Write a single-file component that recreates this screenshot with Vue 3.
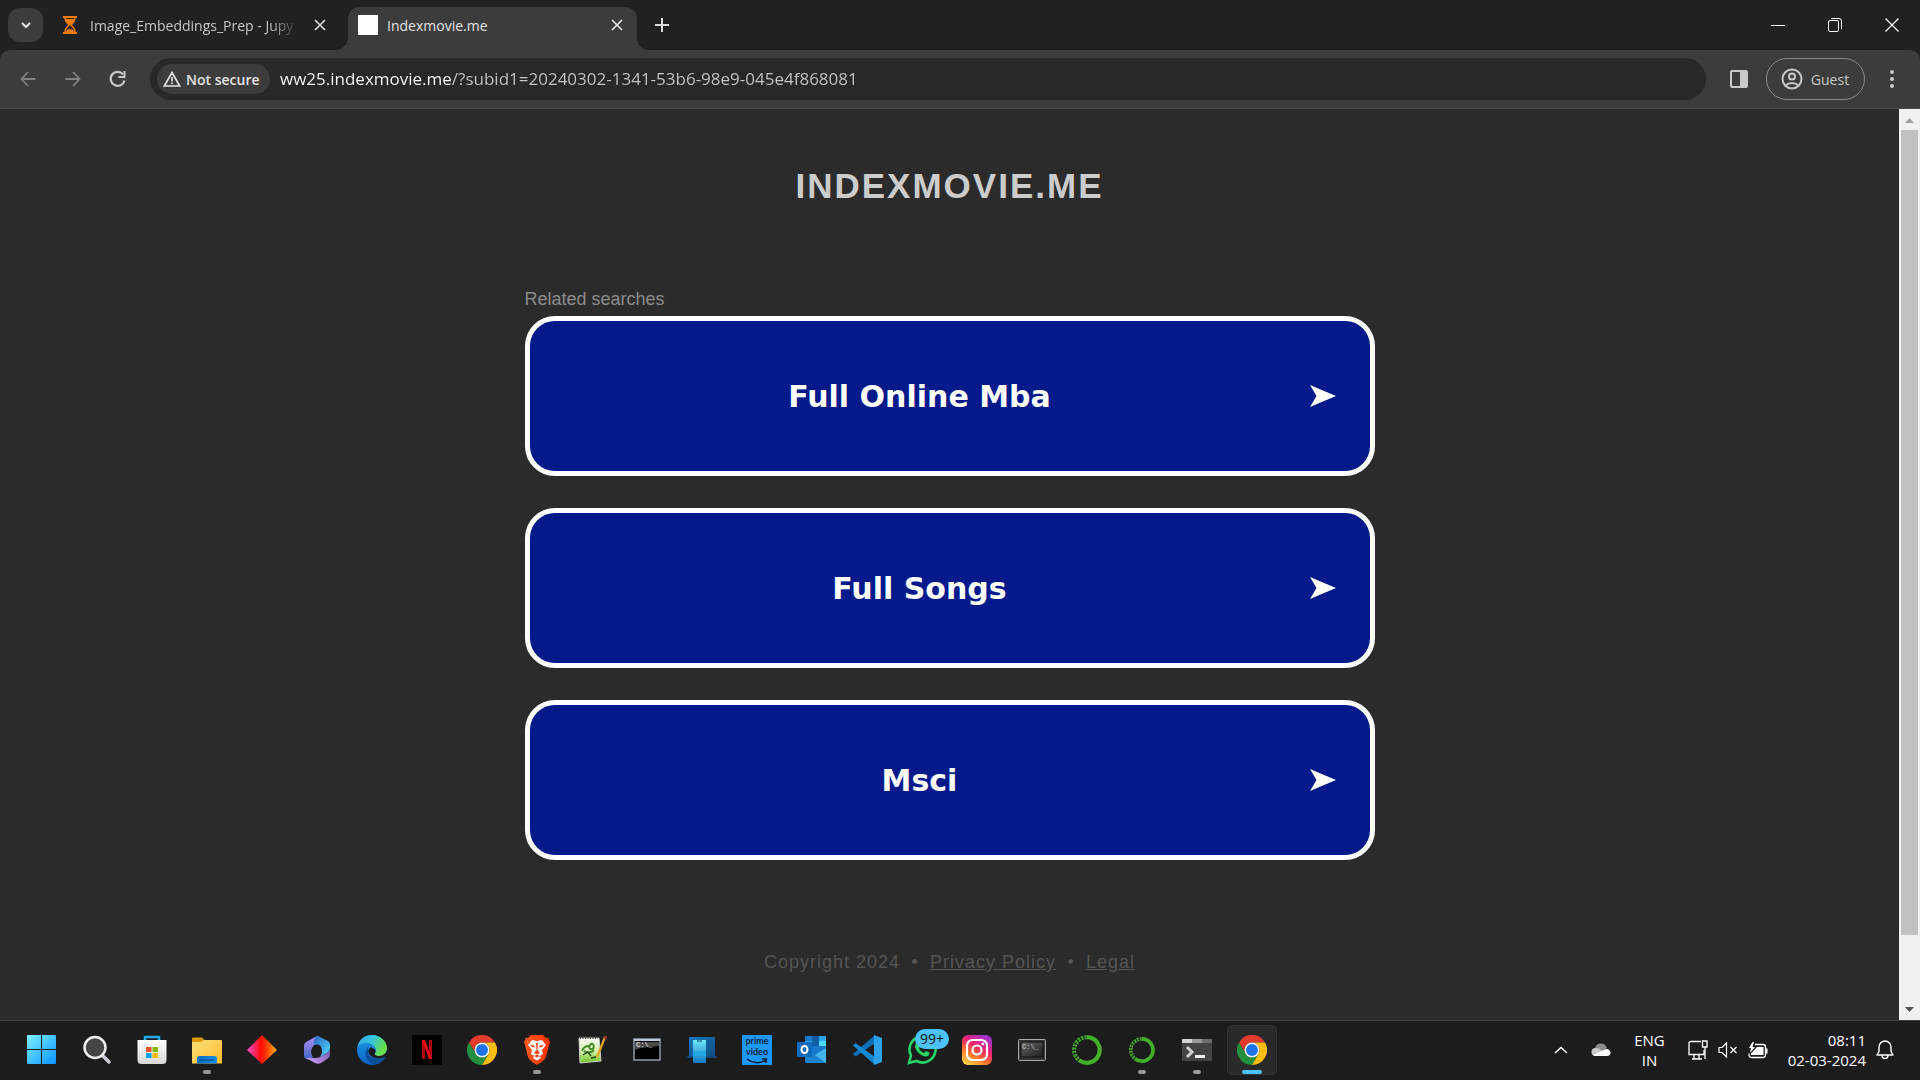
<script setup>
import { ref } from 'vue'

const address = ref('ww25.indexmovie.me/?subid1=20240302-1341-53b6-98e9-045e4f868081')
const searches = ['Full Online Mba', 'Full Songs', 'Msci']
</script>

<template>
  <div class="screen">
    <header class="browser">
      <div class="tabs">
        <button class="tab-search" aria-label="Search tabs">
          <svg width="12" height="12" viewBox="0 0 12 12"><path d="M2 4l4 4 4-4" fill="none" stroke="#e3e3e3" stroke-width="2" /></svg>
        </button>
        <div class="tab">
          <svg class="favicon" width="20" height="20" viewBox="0 0 20 20">
            <path d="M3 1h14v2H3zM3 17h14v2H3z" fill="#f57c00" />
            <path d="M5 3c0 4 2 5 4 7-2 2-4 3-4 7M15 3c0 4-2 5-4 7 2 2 4 3 4 7" fill="none" stroke="#f57c00" stroke-width="1.5" />
            <path d="M5 4h10c0 3-2 4-4 6H9C7 8 5 7 5 4zM6 17c0-2 2-3 4-3s4 1 4 3z" fill="#f57c00" />
          </svg>
          <span class="tab-title faded">Image_Embeddings_Prep - Jupy</span>
          <button class="icon-button" aria-label="Close tab">
            <svg width="12" height="12" viewBox="0 0 12 12"><path d="M1 1l10 10M11 1L1 11" stroke="#dcdcdc" stroke-width="1.6" /></svg>
          </button>
        </div>
        <div class="tab active">
          <span class="blank-icon"></span>
          <span class="tab-title">Indexmovie.me</span>
          <button class="icon-button" aria-label="Close tab">
            <svg width="12" height="12" viewBox="0 0 12 12"><path d="M1 1l10 10M11 1L1 11" stroke="#e8e8e8" stroke-width="1.6" /></svg>
          </button>
        </div>
        <button class="new-tab" aria-label="New tab">
          <svg width="14" height="14" viewBox="0 0 14 14"><path d="M7 0v14M0 7h14" stroke="#dcdcdc" stroke-width="2" /></svg>
        </button>
        <div class="window-controls">
          <button aria-label="Minimize"><svg width="14" height="14" viewBox="0 0 14 14"><path d="M0 7.5h14" stroke="#fff" /></svg></button>
          <button aria-label="Restore">
            <svg width="14" height="14" viewBox="0 0 14 14" fill="none" stroke="#fff"><rect x=".5" y="2.5" width="10" height="11" rx="1.5" /><path d="M3 .5h8a2.500 2.500 0 0 1 2.500 2.500v8" /></svg>
          </button>
          <button aria-label="Close"><svg width="14" height="14" viewBox="0 0 14 14"><path d="M.5.5l13 13M13.500.5l-13 13" stroke="#fff" stroke-width="1.2" /></svg></button>
        </div>
      </div>
      <div class="toolbar">
        <nav class="history">
          <button aria-label="Back"><svg width="16" height="16" viewBox="0 0 16 16"><path d="M15.500 8H2M8 1L1.500 8 8 15" fill="none" stroke="#808080" stroke-width="1.8" /></svg></button>
          <button aria-label="Forward"><svg width="16" height="16" viewBox="0 0 16 16"><path d="M.5 8H14M8 1l6.500 7L8 15" fill="none" stroke="#808080" stroke-width="1.800" /></svg></button>
          <button aria-label="Reload">
            <svg width="18" height="18" viewBox="0 0 18 18"><path d="M15.500 10.500A7 7 0 1 1 14 4.200" fill="none" stroke="#c9c9c9" stroke-width="2.2" /><path d="M16.500 1v7h-7V6h5V1z" fill="#c9c9c9" /></svg>
          </button>
        </nav>
        <div class="omnibox">
          <button class="security">
            <svg width="18" height="16" viewBox="0 0 18 16"><path d="M9 1.500L16.700 15H1.300z" fill="none" stroke="#e3e3e3" stroke-width="1.7" /><path d="M9 6v4.500M9 11.500v1.800" stroke="#e3e3e3" stroke-width="1.700" /></svg>
            Not secure
          </button>
          <input v-model="address" class="address" type="text" aria-label="Address" spellcheck="false" />
        </div>
        <button class="side-panel" aria-label="Side panel">
          <svg width="20" height="20" viewBox="0 0 20 20"><path fill-rule="evenodd" d="M3 1h14a2 2 0 0 1 2 2v14a2 2 0 0 1-2 2H3a2 2 0 0 1-2-2V3a2 2 0 0 1 2-2zm0 2v14h8V3z" fill="#c9c9c9" /></svg>
        </button>
        <button class="guest">
          <svg width="22" height="22" viewBox="0 0 22 22" fill="none" stroke="#c7c7c7" stroke-width="2"><circle cx="11" cy="11" r="9.500" /><circle cx="11" cy="8.500" r="3" /><path d="M4.500 17.500c3.500-3.500 9.500-3.500 13 0" /></svg>
          Guest
        </button>
        <button class="menu" aria-label="Menu">
          <svg width="4" height="20" viewBox="0 0 4 20" fill="#c9c9c9"><circle cx="2" cy="3" r="2" /><circle cx="2" cy="10" r="2" /><circle cx="2" cy="17" r="2" /></svg>
        </button>
      </div>
    </header>

    <div class="viewport">
      <main class="page">
        <h1>INDEXMOVIE.ME</h1>
        <section class="related">
          <h2>Related searches</h2>
          <a v-for="term in searches" :key="term" class="card" href="#">
            <span>{{ term }}</span>
            <svg width="26" height="24" viewBox="0 0 26 24"><path d="M0 1l26 11L0 23l6.500-11z" fill="#fff" /></svg>
          </a>
        </section>
        <footer>
          <span>Copyright 2024</span><span class="dot">•</span><a href="#">Privacy Policy</a><span class="dot">•</span><a href="#">Legal</a>
        </footer>
      </main>
      <div class="scrollbar">
        <svg width="21" height="21" viewBox="0 0 21 21"><path d="M6 14l4.500-5 4.500 5z" fill="#a0a0a0" /></svg>
        <div class="track"><div class="thumb"></div></div>
        <svg width="21" height="21" viewBox="0 0 21 21"><path d="M6 8l4.500 5L15 8z" fill="#505050" /></svg>
      </div>
    </div>

    <div class="taskbar">
      <svg class="defs" width="0" height="0">
        <defs>
          <linearGradient id="win" x1="0" y1="0" x2="1" y2="1"><stop offset="0" stop-color="#7df0ff" /><stop offset="1" stop-color="#0a94ff" /></linearGradient>
          <linearGradient id="bag" x1="0" y1="0" x2="0" y2="1"><stop offset="0" stop-color="#fff" /><stop offset="1" stop-color="#d9d9d9" /></linearGradient>
          <linearGradient id="folder" x1="0" y1="0" x2="1" y2="1"><stop offset="0" stop-color="#ffe07a" /><stop offset="1" stop-color="#fcbc2b" /></linearGradient>
          <linearGradient id="folderblue" x1="0" y1="0" x2="1" y2="0"><stop offset="0" stop-color="#0a6fc4" /><stop offset="1" stop-color="#1a8be0" /></linearGradient>
          <linearGradient id="gem" x1="0" y1="0" x2="1" y2="0"><stop offset="0" stop-color="#ff4fd8" /><stop offset=".45" stop-color="#ff0a0a" /><stop offset=".6" stop-color="#ff2a00" /><stop offset="1" stop-color="#ffb400" /></linearGradient>
          <linearGradient id="m1" x1="0" y1="0" x2="0" y2="1"><stop offset="0" stop-color="#b78cf0" /><stop offset="1" stop-color="#3f68c8" /></linearGradient>
          <linearGradient id="m2" x1="0" y1="0" x2="1" y2="1"><stop offset="0" stop-color="#2a64c8" /><stop offset="1" stop-color="#55dcf8" /></linearGradient>
          <linearGradient id="m3" x1="0" y1="1" x2="1" y2="0"><stop offset="0" stop-color="#d3a3f8" /><stop offset="1" stop-color="#6a52a8" /></linearGradient>
          <linearGradient id="edge1" x1="0" y1="0" x2="1" y2=".4"><stop offset="0" stop-color="#2aa4e8" /><stop offset=".5" stop-color="#35c4dc" /><stop offset="1" stop-color="#6be04a" /></linearGradient>
          <linearGradient id="edge2" x1="0" y1="0" x2="0" y2="1"><stop offset="0" stop-color="#1b9de2" /><stop offset="1" stop-color="#0b63c4" /></linearGradient>
          <linearGradient id="brave" x1="0" y1="0" x2="1" y2="0"><stop offset="0" stop-color="#ff5a1f" /><stop offset="1" stop-color="#ff2d00" /></linearGradient>
          <linearGradient id="npp" x1="0" y1="0" x2="0" y2="1"><stop offset="0" stop-color="#fafcf8" /><stop offset=".5" stop-color="#d9f0b0" /><stop offset="1" stop-color="#68c41c" /></linearGradient>
          <linearGradient id="laptop" x1="0" y1="0" x2="1" y2="1"><stop offset="0" stop-color="#1578bc" /><stop offset="1" stop-color="#0d4c82" /></linearGradient>
          <linearGradient id="phone" x1="0" y1="0" x2="0" y2="1"><stop offset="0" stop-color="#6fe8fa" /><stop offset="1" stop-color="#1277c4" /></linearGradient>
          <linearGradient id="insta" x1=".2" y1="1" x2=".8" y2="0"><stop offset="0" stop-color="#ffd24a" /><stop offset=".3" stop-color="#ff7a2a" /><stop offset=".6" stop-color="#f0246c" /><stop offset="1" stop-color="#9a35d8" /></linearGradient>
          <linearGradient id="dark" x1="0" y1="0" x2="1" y2="1"><stop offset="0" stop-color="#6a6a6a" /><stop offset="1" stop-color="#1c1c1c" /></linearGradient>
          <symbol id="chrome" viewBox="0 0 30 30">
            <path d="M2 7.500A15 15 0 0 1 28 7.500H15A7.500 7.500 0 0 0 8.500 18.750z" fill="#e23b2e" />
            <path d="M2 7.500l6.500 11.250A7.500 7.500 0 0 0 21.500 18.750L15 30A15 15 0 0 1 2 7.500z" fill="#22913f" />
            <path d="M28 7.500A15 15 0 0 1 15 30l6.500-11.250A7.500 7.500 0 0 0 15 7.500z" fill="#fbbc0c" />
            <circle cx="15" cy="15" r="7.500" fill="#fff" /><circle cx="15" cy="15" r="6" fill="#1f73e8" />
          </symbol>
          <symbol id="anaconda" viewBox="0 0 30 30">
            <path d="M15 2.200A12.800 12.800 0 1 1 7 25.100" fill="none" stroke="#43b02a" stroke-width="4.200" />
            <path d="M15 2.200A12.800 12.800 0 0 0 7 25.100" fill="none" stroke="#43b02a" stroke-width="4" stroke-dasharray="2.500 1" />
            <path d="M15 2.200A12.800 12.800 0 0 0 7 25.100" fill="none" stroke="#1c1c1c" stroke-width="1" stroke-dasharray="1.500 1.300" />
          </symbol>
        </defs>
      </svg>
      <div class="apps">
        <button aria-label="Start"><svg width="30" height="30" viewBox="0 0 30 30"><path d="M1 0h13v14H0V1a1 1 0 0 1 1-1zM15 0h13a1 1 0 0 1 1 1v13H15zM0 15h14v14H1a1 1 0 0 1-1-1zM15 15h14v13a1 1 0 0 1-1 1H15z" fill="url(#win)" /></svg></button>
        <button aria-label="Search"><svg width="30" height="30" viewBox="0 0 30 30"><path d="M20.500 20.500l6.500 6.500" stroke="#c9cfd6" stroke-width="3.500" stroke-linecap="round" /><circle cx="13" cy="12.500" r="10.500" fill="#454545" stroke="#eceef0" stroke-width="2.500" /></svg></button>
        <button aria-label="Store"><svg width="30" height="30" viewBox="0 0 30 30"><path d="M8 7V2h14v5" fill="none" stroke="#28a8ec" stroke-width="2.500" /><path d="M.5 5h29v20a4 4 0 0 1-4 4h-21a4 4 0 0 1-4-4z" fill="url(#bag)" /><path d="M9 12h5.500v5H9z" fill="#f25022" /><path d="M15.500 12H21v5h-5.500z" fill="#7fba00" /><path d="M9 18h5.500v5H9z" fill="#00a4ef" /><path d="M15.500 18H21v5h-5.500z" fill="#ffb900" /></svg></button>
        <button class="running" aria-label="File Explorer"><svg width="30" height="30" viewBox="0 0 30 30"><path d="M0 3.500a1 1 0 0 1 1-1h9l3 3-4 4H0z" fill="#dd9a07" /><path d="M0 7h9l3-2h17a1 1 0 0 1 1 1v22.500H0z" fill="url(#folder)" /><path d="M5 28.500v-5A2.500 2.500 0 0 1 7.500 21h15a2.500 2.500 0 0 1 2.500 2.500v5z" fill="url(#folderblue)" /><path d="M8 25h14" stroke="#084e91" stroke-width="1.200" /></svg></button>
        <button aria-label="Diamond"><svg width="30" height="30" viewBox="0 0 30 30"><path d="M15 0l15 15-15 14L0 15z" fill="url(#gem)" /></svg></button>
        <button aria-label="Microsoft 365"><svg width="30" height="30" viewBox="0 0 30 30"><path d="M15 1L4 7a4 4 0 0 0-2 4v10c0 3 4 4 6 3l3-2c-4-5-1-12 4-13z" fill="url(#m1)" /><path d="M15 1c-3 2-4 6-3 9l7 3c2 3 1 6-1 9l7-4c2-1 3-3 3-5v-3c0-2-1-3-2-4l-8-4c-1-1-2-1-3-1z" fill="url(#m2)" /><path d="M28 13c0 4-5 6-10 9-5 2-9 0-14 1l9 5c2 1 4 1 6 0l6-4c2-1 3-3 3-5z" fill="url(#m3)" /><circle cx="15" cy="14" r="4.500" fill="#1c1c1c" /></svg></button>
        <button aria-label="Edge"><svg width="30" height="30" viewBox="0 0 30 30"><circle cx="15" cy="15" r="15" fill="url(#edge2)" /><path d="M.5 12C2 4 8 0 15 0c9 0 15 7 15 13 0 5-4 8-8 8-3 0-5-1-4-3 2-2 1-5-1-7C12 6 4 7 .5 12z" fill="url(#edge1)" /><path d="M11 12c-6 8 0 17 8 17.500 4-1 7-4 8.500-7.500-6 3-15 2-16.500-4z" fill="#0d4f9c" /><path d="M15 12c-4 1-5 6-1 9 4 3 10 3 14 1l2 1v-8c-1 4-5 6-8 6-3 0-5-1-4-3 1-1 1-4-3-5z" fill="#1c1c1c" /></svg></button>
        <button aria-label="Netflix"><svg width="30" height="30" viewBox="0 0 30 30"><rect width="30" height="30" fill="#000" /><rect x="10" y="5" width="3" height="19" fill="#b1060f" /><rect x="17" y="5" width="3" height="19" fill="#b1060f" /><path d="M10 5h3l7 19h-3z" fill="#f00a15" /></svg></button>
        <button aria-label="Chrome"><svg width="30" height="30"><use href="#chrome" /></svg></button>
        <button class="running" aria-label="Brave"><svg width="30" height="30" viewBox="0 0 30 30"><path d="M9 0h12l3 3 2-.5 2 4.500-1 3-3 12c-1 3-6 6-9 8-3-2-8-5-9-8L3 10 2 7l2-4.500L6 3z" fill="url(#brave)" /><path d="M10 5l5 1 5-1 4 5-4 5 1 4-3 2 1 2-4 2.500-4-2.500 1-2-3-2 1-4-4-5z" fill="#fff" /><path d="M8 9.500l4 1 1 2-3-.5zM22 9.500l-4 1-1 2 3-.5zM14 8h2l-.5 7 2.500 3-3 1.500-3-1.500 2.500-3zM12 21l3-1.500 3 1.500-3 1.500z" fill="#fa4a18" /></svg></button>
        <button aria-label="Notepad++"><svg width="30" height="30" viewBox="0 0 30 30"><path d="M2 3h20l2 23-21 2z" fill="url(#npp)" stroke="#d0d0d0" /><path d="M3 2.500h18" stroke="#444" stroke-width="3" stroke-dasharray="1 1.500" /><path d="M5 16c1-3 4-5 7-5M13 9c4-2 5 4 2 5s-4-4 0-5M7 16c4 3 8 1 10-1" fill="none" stroke="#3f8a22" stroke-width="1.800" /><path d="M6 20l5-3 3 4M14 23l5-1" stroke="#263a14" stroke-width="1.300" fill="none" /><path d="M28 2l-7 18-1 2" stroke="#e7a125" stroke-width="2.200" fill="none" /><path d="M29 1l-1 3" stroke="#a03020" stroke-width="2.500" /></svg></button>
        <button aria-label="Command Prompt"><svg width="28" height="24" viewBox="0 0 28 24"><path d="M1 1h26v21H1z" fill="#000" stroke="#8e98a5" stroke-width="1.500" /><path d="M1 1h26v2H1z" fill="#c3ccd6" /><path d="M2 12C8 9 18 9 26 8V4H2z" fill="#4a4a4a" /><text x="3" y="9" class="prompt">C:\_</text></svg></button>
        <button aria-label="Phone Link"><svg width="30" height="30" viewBox="0 0 30 30"><path d="M3 2h24a1 1 0 0 1 1 1v18H2V3a1 1 0 0 1 1-1z" fill="url(#laptop)" /><path d="M0 21h30l-1 2H1z" fill="#0a4a80" /><path d="M6 5h13v23H7a1 1 0 0 1-1-1z" fill="url(#phone)" /><path d="M6 16h13v5H6z" fill="#28a8e0" /><path d="M10 6h5" stroke="#0a3c6a" /></svg></button>
        <button aria-label="Prime Video"><span class="prime">prime<br />video<svg width="22" height="6" viewBox="0 0 22 6"><path d="M1 1c6 4.500 13 4.500 19 1M16 1h4.500L20 5" fill="none" stroke="#0b1f33" stroke-width="1.500" /></svg></span></button>
        <button aria-label="Outlook"><svg width="30" height="30" viewBox="0 0 30 30"><path d="M8 1h21v26H8z" fill="#1679ca" /><path d="M8 6h7v6H8zM22 1h7v5h-7z" fill="#28a8ea" /><path d="M15 6h7v5h-7zM15 1h7v5h-7z" fill="#0f5ca8" /><path d="M22 6h7v5h-7z" fill="#50d9ff" /><path d="M8 13l10 7 11-8v16H10a2 2 0 0 1-2-2z" fill="#1d83cf" /><path d="M18 20l11-7v15z" fill="#46b4ea" /><rect y="7" width="15" height="15" rx="1" fill="#0f6cbd" /><ellipse cx="7.500" cy="14.500" rx="3" ry="3.500" fill="none" stroke="#fff" stroke-width="2" /></svg></button>
        <button aria-label="Visual Studio Code"><svg width="30" height="30" viewBox="0 0 30 30"><path d="M1 19l2.500 2.500L23 8V0z" fill="#0b72b8" /><path d="M1 10.500L3.500 8 23 22v8z" fill="#1588cf" /><path d="M22 0l8 3v24l-8 3V0z" fill="#2da2ea" /></svg></button>
        <button aria-label="WhatsApp"><svg width="30" height="30" viewBox="0 0 30 30"><path d="M2 28l2-7.500A13 13 0 1 1 9.500 26z" fill="none" stroke="#25d366" stroke-width="2.600" /><path d="M9 8c1-1 3-1 3 0l1.500 3-1.500 2c1 3 3 4 5 5l2-2 3.500 1.500c0 3-2 4.500-4.500 4C13 20.500 8 15 8 11z" fill="#25d366" /></svg><span class="badge">99+</span></button>
        <button aria-label="Instagram"><svg width="30" height="30" viewBox="0 0 30 30"><rect width="30" height="30" rx="6" fill="url(#insta)" /><g fill="none" stroke="#fff" stroke-width="2.200"><rect x="5" y="5" width="20" height="20" rx="5.500" /><circle cx="15" cy="15" r="4.500" /></g><circle cx="20.800" cy="9" r="1.400" fill="#fff" /></svg></button>
        <button aria-label="Console"><svg width="28" height="22" viewBox="0 0 28 22"><rect x=".5" y=".5" width="27" height="21" rx="1" fill="#343434" stroke="#aaa" /><path d="M3 3h22v15H3z" fill="url(#dark)" stroke="#111" /><text x="4" y="10" class="prompt dim">C:\_</text></svg></button>
        <button aria-label="Anaconda"><svg width="30" height="30"><use href="#anaconda" /></svg></button>
        <button class="running" aria-label="Anaconda Navigator"><svg width="26" height="26"><use href="#anaconda" /></svg></button>
        <button class="running" aria-label="Terminal"><svg width="30" height="22" viewBox="0 0 30 22"><rect width="30" height="22" rx="1" fill="#444" /><path d="M0 4V1a1 1 0 0 1 1-1h9v4z" fill="#d4d4d4" /><path d="M10 0h10v4H10z" fill="#9a9a9a" /><path d="M20 0h9a1 1 0 0 1 1 1v3H20z" fill="#6c6c6c" /><path d="M5 8l5 5-5 5" fill="none" stroke="#d0d0d0" stroke-width="3" /><path d="M13 16h10v3H13z" fill="#f0f0f0" /></svg></button>
        <button class="running current" aria-label="Chrome window"><svg width="30" height="30"><use href="#chrome" /></svg></button>
      </div>
      <div class="tray">
        <button aria-label="Hidden icons"><svg width="14" height="8" viewBox="0 0 14 8"><path d="M1 7l6-5.500L13 7" fill="none" stroke="#fff" stroke-width="1.600" /></svg></button>
        <button aria-label="OneDrive"><svg width="20" height="14" viewBox="0 0 20 14"><path d="M4 6C5-1 14-1 16 5l-5 4z" fill="#8c8c8c" /><path d="M4 13a4 4 0 0 1 1-8c3 0 6 3 9 5l-6 3z" fill="#c9c9c9" /><path d="M2 12l13-6c6 0 6 7 1 7H4z" fill="#fff" /></svg></button>
        <button class="language">ENG<br />IN</button>
        <button class="status" aria-label="Network, sound and battery">
          <svg width="20" height="20" viewBox="0 0 20 20" fill="none" stroke="#fff" stroke-width="1.300"><path d="M13 1.500H2.500a1.500 1.500 0 0 0-1.500 1.500v11.500h15V10M6 15v4M11 15v4M4 19h10" /><path d="M14.500 1h4.500v6h-4.500zM17 7v12" /></svg>
          <svg width="20" height="16" viewBox="0 0 20 16" fill="none" stroke="#fff" stroke-width="1.200"><path d="M1 5.500h3L8.500 1v14L4 10.500H1z" /><path d="M12.500 5l6 6M18.500 5l-6 6" /></svg>
          <svg width="20" height="17" viewBox="0 0 20 17"><path d="M7 2.500h8a2.500 2.500 0 0 1 2.500 2.500v8a2.500 2.500 0 0 1-2.500 2.500H3.500A2.500 2.500 0 0 1 1 13v-1.500" fill="none" stroke="#fff" stroke-width="1.300" /><path d="M18 6.500h1.500v5H18zM9 5h6.500v8H3v-1.500z" fill="#fff" /><path d="M4.500 0L1 6h2l-1 5 5-6H4.500L6 0z" fill="#fff" /></svg>
        </button>
        <button class="clock">08:11<br />02-03-2024</button>
        <button aria-label="Notifications"><svg width="18" height="20" viewBox="0 0 18 20"><path d="M1 15l2-3.500V7a6 6 0 0 1 12 0v4.500l2 3.500zM6 15.500a3 3 0 0 0 6 0" fill="none" stroke="#fff" stroke-width="1.400" stroke-linejoin="round" /></svg></button>
      </div>
    </div>
  </div>
</template>

<style>
body {
  margin: 0;
  background: #2b2b2b;
}
</style>

<style scoped>
.screen {
  min-height: 100vh;
  display: flex;
  flex-direction: column;
  font-family: "Open Sans", "Noto Sans", sans-serif;
  color: #e3e3e3;
}
.screen * {
  box-sizing: border-box;
}
button {
  display: flex;
  align-items: center;
  justify-content: center;
  padding: 0;
  border: 0;
  background: none;
  font: inherit;
  color: inherit;
}
svg {
  display: block;
  flex: none;
}

/* Tab strip */
.browser {
  background: #202221;
}
.tabs {
  display: flex;
  align-items: flex-end;
  height: 50px;
}
.tab-search {
  width: 35px;
  height: 34px;
  margin: 0 5px 8px 8px;
  border-radius: 12px;
  background: #3c3c3c;
}
.tab {
  position: relative;
  display: flex;
  align-items: center;
  width: 289px;
  height: 43px;
  padding: 0 10px 7px;
  font-size: 14px;
  border-radius: 12px 12px 0 0;
}
.tab:not(.active) {
  width: 288px;
  margin-right: 12px;
  padding: 0 6px 7px 8px;
  color: #c7c7c7;
}
.tab.active {
  background: #3c3c3c;
}
.tab.active::before,
.tab.active::after {
  content: "";
  position: absolute;
  bottom: 0;
  width: 12px;
  height: 12px;
}
.tab.active::before {
  right: 100%;
  background: radial-gradient(circle at 0 0, transparent 12px, #3c3c3c 12px);
}
.tab.active::after {
  left: 100%;
  background: radial-gradient(circle at 100% 0, transparent 12px, #3c3c3c 12px);
}
.favicon {
  margin: 0 10px 0 4px;
}
.blank-icon {
  width: 20px;
  height: 20px;
  margin-right: 9px;
  background: #fff;
}
.tab-title {
  flex: 1;
  overflow: hidden;
  white-space: nowrap;
}
.faded {
  mask-image: linear-gradient(to right, #000 85%, transparent);
}
.icon-button {
  width: 20px;
  height: 20px;
  margin-left: 10px;
}
.new-tab {
  width: 34px;
  height: 34px;
  margin: 0 0 8px 8px;
}
.window-controls {
  display: flex;
  margin-left: auto;
}
.window-controls button {
  width: 57px;
  height: 50px;
}

/* Toolbar */
.toolbar {
  display: flex;
  align-items: center;
  height: 59px;
  padding: 0 18px 0 5px;
  border-bottom: 1px solid #4a4a4a;
  border-radius: 10px 10px 0 0;
  background: #3c3c3c;
}
.history {
  display: flex;
}
.history button {
  width: 45px;
  height: 40px;
}
.omnibox {
  display: flex;
  align-items: center;
  flex: 1;
  height: 42px;
  margin-left: 10px;
  padding: 0 24px 0 7px;
  border-radius: 21px;
  background: #282828;
}
.security {
  justify-content: flex-start;
  gap: 5px;
  width: 113px;
  height: 30px;
  padding-left: 6px;
  border-radius: 15px;
  background: #3c3c3c;
  font-size: 14px;
  font-weight: 600;
  white-space: nowrap;
}
.address {
  flex: 1;
  height: 30px;
  padding: 0;
  margin-left: 10px;
  border: 0;
  outline: 0;
  font: 17px/30px "Open Sans", "Noto Sans", sans-serif;
  color: transparent;
  background: linear-gradient(to right, #fff 171px, #c7c7c7 171px);
  background-clip: text;
}
.side-panel {
  width: 20px;
  height: 40px;
  margin-left: 23px;
}
.guest {
  gap: 8px;
  width: 99px;
  height: 42px;
  margin-left: 17px;
  padding-right: 1px;
  border: 1px solid #8a8a8a;
  border-radius: 21px;
  font-size: 14px;
  color: #c7c7c7;
}
.menu {
  width: 20px;
  height: 40px;
  margin-left: 17px;
}

/* Web page */
.viewport {
  flex: 1;
  display: flex;
  background: #2b2b2b;
  font-family: "Liberation Sans", Arial, sans-serif;
}
.page {
  flex: 1;
  display: flex;
  flex-direction: column;
  align-items: center;
}
h1 {
  margin: 57px 0 0;
  font-size: 35px;
  line-height: 40px;
  letter-spacing: 2px;
  color: #ccc;
}
.related {
  display: flex;
  flex-direction: column;
  gap: 32px;
  width: 850px;
  max-width: 100%;
  margin-top: 82px;
}
h2 {
  margin: 0 0 -26px;
  font-size: 18px;
  line-height: 22px;
  font-weight: 400;
  color: #8c8c8c;
}
.card {
  display: flex;
  align-items: center;
  height: 160px;
  padding: 0 34px 0 0;
  border: 5px solid #fff;
  border-radius: 30px;
  background: #02198b;
  color: #fff;
  font: bold 30px/40px "DejaVu Sans", Verdana, sans-serif;
  text-align: center;
  text-decoration: none;
}
.card span {
  flex: 1;
  padding-top: 2px;
}
footer {
  display: flex;
  margin-top: 90px;
  font-size: 18px;
  line-height: 24px;
  letter-spacing: 1px;
  color: #555;
}
footer a {
  color: inherit;
}
.dot {
  width: 30px;
  text-align: center;
}
.scrollbar {
  display: flex;
  flex-direction: column;
  width: 21px;
  background: #f1f1f1;
}
.track {
  display: flex;
  flex: 1;
  flex-direction: column;
  padding: 0 2px;
}
.thumb {
  flex: 25;
  background: #c1c1c1;
}
.track::after {
  content: "";
  flex: 2;
}

/* Taskbar */
.taskbar {
  display: flex;
  justify-content: space-between;
  align-items: center;
  height: 60px;
  padding: 0 26px 1px 17px;
  border-top: 1px solid #3d3d3d;
  background: #1c1c1c;
}
.defs {
  position: absolute;
}
.apps {
  display: flex;
  gap: 5px;
}
.apps button {
  position: relative;
  width: 50px;
  height: 50px;
  border-radius: 5px;
}
.running::after {
  content: "";
  position: absolute;
  bottom: 1px;
  width: 8px;
  height: 4px;
  border-radius: 2px;
  background: #999;
}
.apps .current {
  border: 1px solid #333;
  background: #292929;
}
.current::after {
  bottom: 0;
  width: 20px;
  background: #4cc2ff;
}
.prime {
  width: 30px;
  height: 30px;
  background: #1a98ff;
  color: #0b1f33;
  font: bold 9px/11px "Lato", "Open Sans", sans-serif;
}
.prime svg {
  margin: 1px auto 0;
}
.prompt {
  font: bold 7px "Liberation Mono", monospace;
  fill: #ddd;
}
.dim {
  fill: #aaa;
}
.badge {
  position: absolute;
  top: 4px;
  left: 18px;
  width: 34px;
  height: 20px;
  border-radius: 10px;
  background: #4cc2ff;
  color: #111;
  font-size: 14px;
  line-height: 20px;
}
.tray {
  display: flex;
  align-items: center;
  font-size: 15px;
  line-height: 20px;
  color: #fff;
}
.tray button + button {
  margin-left: 23px;
}
.tray .status {
  gap: 10px;
}
.tray .clock {
  margin-left: 20px;
  text-align: right;
}
.tray .clock + button {
  margin-left: 10px;
}
</style>
